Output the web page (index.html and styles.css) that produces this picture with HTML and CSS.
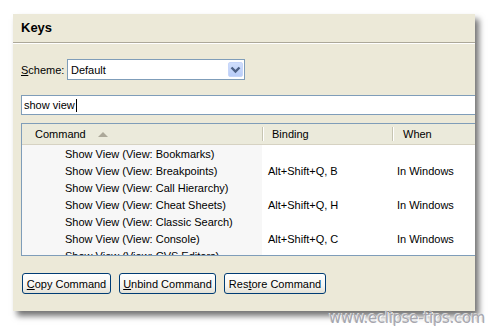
FILE: index.html
```html
<!DOCTYPE html>
<html>
<head>
<meta charset="utf-8">
<link rel="stylesheet" href="styles.css">
</head>
<body>
<div class="panel">
  <div class="title">Keys</div>
  <div class="content">
    <div class="scheme-row">
      <span class="label"><u>S</u>cheme:</span>
      <div class="combo">
        <span class="combo-text">Default</span>
        <span class="combo-btn">
          <svg width="11" height="8" viewBox="0 0 11 8"><path d="M1.5 1.5 L5.5 5.5 L9.5 1.5" fill="none" stroke="#4d6185" stroke-width="2.4"/></svg>
        </span>
      </div>
    </div>
    <div class="search">show view<span class="caret"></span></div>
    <div class="table">
      <div class="thead">
        <div class="th th-cmd">Command<span class="sort"></span></div>
        <div class="th th-bind">Binding</div>
        <div class="th th-when">When</div>
      </div>
      <div class="tbody">
        <div class="row"><div class="td cmd">Show View (View: Bookmarks)</div><div class="td bind"></div><div class="td when"></div></div>
        <div class="row"><div class="td cmd">Show View (View: Breakpoints)</div><div class="td bind">Alt+Shift+Q, B</div><div class="td when">In Windows</div></div>
        <div class="row"><div class="td cmd">Show View (View: Call Hierarchy)</div><div class="td bind"></div><div class="td when"></div></div>
        <div class="row"><div class="td cmd">Show View (View: Cheat Sheets)</div><div class="td bind">Alt+Shift+Q, H</div><div class="td when">In Windows</div></div>
        <div class="row"><div class="td cmd">Show View (View: Classic Search)</div><div class="td bind"></div><div class="td when"></div></div>
        <div class="row"><div class="td cmd">Show View (View: Console)</div><div class="td bind">Alt+Shift+Q, C</div><div class="td when">In Windows</div></div>
        <div class="row"><div class="td cmd">Show View (View: CVS Editors)</div><div class="td bind"></div><div class="td when"></div></div>
      </div>
    </div>
    <div class="buttons">
      <button class="btn btn-copy"><u>C</u>opy Command</button>
      <button class="btn btn-unbind"><u>U</u>nbind Command</button>
      <button class="btn btn-restore">Res<u>t</u>ore Command</button>
    </div>
  </div>
</div>
<div class="watermark">www.eclipse-tips.com</div>
</body>
</html>
```

FILE: styles.css
```css
html, body {
  margin: 0;
  padding: 0;
  background: #ffffff;
  width: 491px;
  height: 329px;
  overflow: hidden;
  position: relative;
  font-family: "Liberation Sans", Arial, sans-serif;
  font-size: 11px;
  color: #000;
}
.panel {
  margin: 14px 0 0 13px;
  width: 462px;
  height: 297px;
  background: #ece9d8;
  box-shadow: 4px 5px 6px rgba(0,0,0,0.55);
  overflow: hidden;
}
.title {
  height: 28px;
  line-height: 28px;
  padding-left: 8px;
  font-weight: bold;
  font-size: 13px;
  border-bottom: 1px solid #aca899;
  box-shadow: 0 1px 0 #ffffff;
}
.content {
  padding-left: 8px;
}
.scheme-row {
  display: flex;
  align-items: center;
  margin-top: 16px;
  height: 21px;
}
.label {
  width: 46px;
}
.combo {
  width: 176px;
  height: 19px;
  border: 1px solid #7f9db9;
  background: #fff;
  display: flex;
  align-items: center;
  justify-content: space-between;
}
.combo-text {
  padding-left: 3px;
}
.combo-btn {
  width: 15px;
  height: 15px;
  margin-right: 1px;
  background: linear-gradient(#d0defc, #b9cdf8);
  border: 1px solid #c7d6f9;
  border-radius: 2px;
  display: flex;
  align-items: center;
  justify-content: center;
  box-sizing: border-box;
}
.search {
  margin-top: 15px;
  width: 460px;
  height: 18px;
  line-height: 18px;
  border: 1px solid #7f9db9;
  border-right: none;
  background: #fff;
  padding-left: 2px;
  display: flex;
  align-items: center;
}
.caret {
  display: inline-block;
  width: 1px;
  height: 13px;
  background: #000;
  margin-left: 1px;
}
.table {
  margin-top: 8px;
  width: 470px;
  height: 131px;
  border: 1px solid #7f9db9;
  border-right: none;
  background: #fff;
  overflow: hidden;
}
.thead {
  display: flex;
  height: 20px;
  background: #ebeadb;
  border-bottom: 1px solid #d6d2c2;
}
.th {
  line-height: 21px;
  box-sizing: border-box;
  position: relative;
}
.th-cmd {
  width: 240px;
  padding-left: 13px;
}
.th-bind {
  width: 130px;
  padding-left: 9px;
  border-left: 1px solid #c7c5b2;
  box-shadow: inset 1px 0 0 #fff;
  height: 14px;
  margin-top: 3px;
  line-height: 15px;
}
.th-when {
  flex: 1;
  padding-left: 10px;
  border-left: 1px solid #c7c5b2;
  box-shadow: inset 1px 0 0 #fff;
  height: 14px;
  margin-top: 3px;
  line-height: 15px;
}
.sort {
  display: inline-block;
  width: 0;
  height: 0;
  border-left: 5px solid transparent;
  border-right: 5px solid transparent;
  border-bottom: 5px solid #aca899;
  margin-left: 12px;
  vertical-align: 1px;
}
.tbody {
  display: flex;
  flex-direction: column;
  padding-top: 1px;
  background: linear-gradient(to right, #f7f7f7 0, #f7f7f7 240px, #fff 240px);
}
.row {
  display: flex;
  height: 17px;
  line-height: 17px;
  white-space: nowrap;
}
.td.cmd {
  width: 240px;
  padding-left: 43px;
  box-sizing: border-box;
}
.td.bind {
  width: 129px;
  padding-left: 6px;
  box-sizing: border-box;
}
.td.when {
  flex: 1;
  padding-left: 6px;
}
.buttons {
  display: flex;
  gap: 8px;
  margin-top: 17px;
  padding-left: 1px;
}
.btn {
  font-family: "Liberation Sans", Arial, sans-serif;
  font-size: 11px;
  height: 21px;
  padding: 0;
  border: 1px solid #003c74;
  border-radius: 3px;
  background: linear-gradient(#ffffff 0%, #f6f5f1 60%, #e3e1d6 100%);
  color: #000;
}
.btn-copy { width: 89px; }
.btn-unbind { width: 97px; }
.btn-restore { width: 102px; }
.watermark {
  position: absolute;
  left: 329px;
  top: 309px;
  font-family: "DejaVu Sans", sans-serif;
  font-size: 15px;
  letter-spacing: -0.3px;
  color: #a6a6ae;
  text-shadow: 1px 1px 0 #ffffff, -1px -1px 0 #dadada;
}
```
